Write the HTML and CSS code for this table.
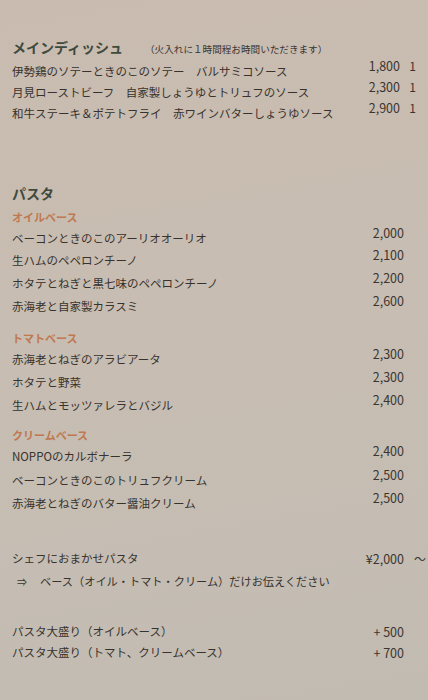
FILE: index.html
```html
<!DOCTYPE html>
<html lang="ja">
<head>
<meta charset="utf-8">
<title>メニュー</title>
<link rel="stylesheet" href="styles.css">
</head>
<body>
<main class="menu">
  <section class="main-dish">
    <h2 class="heading">メインディッシュ<span class="note">（火入れに１時間程お時間いただきます）</span></h2>
    <div class="row"><span class="name">伊勢鶏のソテーときのこのソテー　バルサミコソース</span><span class="price">1,800</span><span class="extra">1</span></div>
    <div class="row"><span class="name">月見ローストビーフ　自家製しょうゆとトリュフのソース</span><span class="price">2,300</span><span class="extra">1</span></div>
    <div class="row"><span class="name">和牛ステーキ＆ポテトフライ　赤ワインバターしょうゆソース</span><span class="price">2,900</span><span class="extra">1</span></div>
  </section>

  <section class="pasta">
    <h2 class="heading">パスタ</h2>

    <h3 class="sub">オイルベース</h3>
    <div class="group oil">
      <div class="row"><span class="name">ベーコンときのこのアーリオオーリオ</span><span class="price">2,000</span><span class="extra"></span></div>
      <div class="row"><span class="name">生ハムのペペロンチーノ</span><span class="price">2,100</span><span class="extra"></span></div>
      <div class="row"><span class="name">ホタテとねぎと黒七味のペペロンチーノ</span><span class="price">2,200</span><span class="extra"></span></div>
      <div class="row"><span class="name">赤海老と自家製カラスミ</span><span class="price">2,600</span><span class="extra"></span></div>
    </div>

    <h3 class="sub">トマトベース</h3>
    <div class="group tomato">
      <div class="row"><span class="name">赤海老とねぎのアラビアータ</span><span class="price">2,300</span><span class="extra"></span></div>
      <div class="row"><span class="name">ホタテと野菜</span><span class="price">2,300</span><span class="extra"></span></div>
      <div class="row"><span class="name">生ハムとモッツァレラとバジル</span><span class="price">2,400</span><span class="extra"></span></div>
    </div>

    <h3 class="sub">クリームベース</h3>
    <div class="group cream">
      <div class="row"><span class="name">NOPPOのカルボナーラ</span><span class="price">2,400</span><span class="extra"></span></div>
      <div class="row"><span class="name">ベーコンときのこのトリュフクリーム</span><span class="price">2,500</span><span class="extra"></span></div>
      <div class="row"><span class="name">赤海老とねぎのバター醤油クリーム</span><span class="price">2,500</span><span class="extra"></span></div>
    </div>
  </section>

  <section class="chef">
    <div class="row flat"><span class="name">シェフにおまかせパスタ</span><span class="price">¥2,000</span><span class="extra tilde">～</span></div>
    <div class="hint"><span class="arrow">⇒</span><span>ベース（オイル・トマト・クリーム）だけお伝えください</span></div>
  </section>

  <section class="large">
    <div class="row flat"><span class="name">パスタ大盛り（オイルベース）</span><span class="price">+ 500</span><span class="extra"></span></div>
    <div class="row flat"><span class="name">パスタ大盛り（トマト、クリームベース）</span><span class="price">+ 700</span><span class="extra"></span></div>
  </section>
</main>
</body>
</html>
```

FILE: styles.css
```css
html, body {
  margin: 0;
  padding: 0;
}

body {
  width: 428px;
  height: 700px;
  overflow: hidden;
  background: linear-gradient(170deg, #c9bbaf 0%, #c8bdb2 40%, #c5bdb3 75%, #c2bbb1 100%);
  font-family: "Noto Sans CJK JP", "Noto Sans", sans-serif;
  color: #37322d;
}

.menu {
  padding: 37px 14px 0 12px;
}

.heading {
  margin: 0;
  font-size: 14px;
  line-height: 20px;
  font-weight: 700;
  color: #3e4a3e;
}

.note {
  margin-left: 22px;
  font-size: 9.6px;
  font-weight: 400;
  color: #3a3530;
}

.row {
  display: flex;
  align-items: flex-start;
  font-size: 11.5px;
  line-height: 22.7px;
}

.name {
  flex: 1;
  white-space: nowrap;
}

.price {
  font-size: 12.5px;
  line-height: 12px;
  text-align: right;
  color: #3a3531;
}

.extra {
  width: 10px;
  flex: none;
  font-size: 12px;
  line-height: 12px;
  text-align: right;
  color: #3a3531;
}

.main-dish .heading {
  margin-bottom: 2px;
}

.main-dish .row {
  line-height: 21px;
}

.main-dish .price,
.main-dish .extra {
  line-height: 10px;
}

.main-dish .price {
  margin-right: 3px;
}

.main-dish .extra {
  width: 13px;
  margin-right: -2px;
}

.pasta {
  margin-top: 59px;
}

.pasta .heading {
  margin-bottom: 4.5px;
}

.sub {
  margin: 0 0 1px;
  font-size: 11px;
  line-height: 18px;
  font-weight: 700;
  color: #bf7850;
}

.group.oil {
  margin-bottom: 12px;
}

.group.tomato {
  margin-bottom: 10px;
}

.group.cream .row {
  line-height: 23.2px;
}

.chef {
  margin-top: 32px;
}

.row.flat {
  align-items: center;
  line-height: 23px;
}

.row.flat .price,
.row.flat .extra {
  line-height: 23px;
}

.chef .extra.tilde {
  width: 0;
  margin-left: 7px;
  padding-left: 3px;
  white-space: nowrap;
  text-align: left;
}

.hint {
  display: flex;
  gap: 13px;
  padding-left: 5px;
  font-size: 11.2px;
  line-height: 23px;
}

.arrow {
  font-size: 10px;
}

.large {
  margin-top: 28px;
}

.large .row.flat {
  line-height: 21px;
}

.large .row.flat .price {
  line-height: 21px;
}
```
